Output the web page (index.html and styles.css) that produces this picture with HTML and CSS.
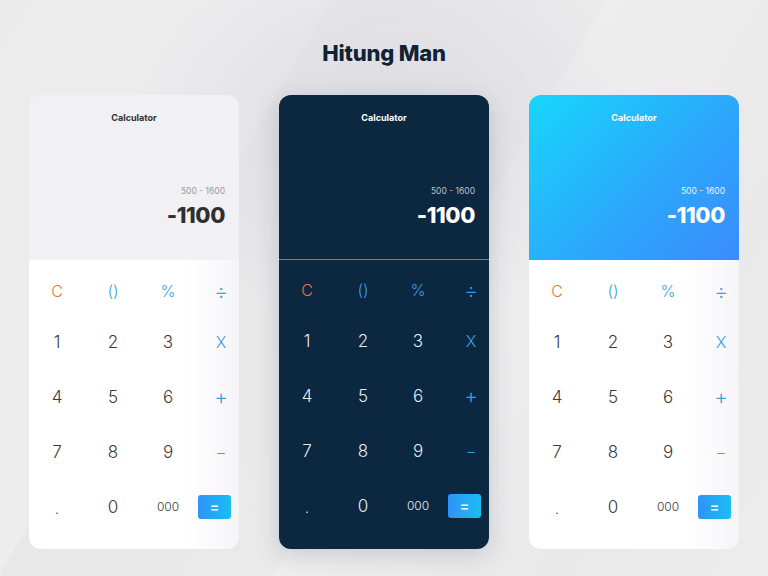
FILE: index.html
```html
<!DOCTYPE html>
<html lang="id">
<head>
  <meta charset="UTF-8" />
  <meta name="viewport" content="width=device-width, initial-scale=1.0"/>
  <title>Hitung Man</title>
  <link rel="stylesheet" href="styles.css">
</head>
<body>

  <h1 class="title">Hitung Man</h1>

  <div class="cards">

    <!-- Tema terang -->
    <div class="calc light">
      <div class="display">
        <div class="calc-name">Calculator</div>
        <div class="expr">500 - 1600</div>
        <div class="result">-1100</div>
      </div>
      <div class="keypad">
        <span class="key clear">C</span>
        <span class="key op">()</span>
        <span class="key op">%</span>
        <span class="key op big">÷</span>
        <span class="key">1</span>
        <span class="key">2</span>
        <span class="key">3</span>
        <span class="key op">X</span>
        <span class="key">4</span>
        <span class="key">5</span>
        <span class="key">6</span>
        <span class="key op big">+</span>
        <span class="key">7</span>
        <span class="key">8</span>
        <span class="key">9</span>
        <span class="key op">−</span>
        <span class="key dot">.</span>
        <span class="key">0</span>
        <span class="key small">000</span>
        <span class="key"><span class="equal">=</span></span>
      </div>
    </div>

    <!-- Tema gelap -->
    <div class="calc dark">
      <div class="display">
        <div class="calc-name">Calculator</div>
        <div class="expr">500 - 1600</div>
        <div class="result">-1100</div>
      </div>
      <div class="keypad">
        <span class="key clear">C</span>
        <span class="key op">()</span>
        <span class="key op">%</span>
        <span class="key op big">÷</span>
        <span class="key">1</span>
        <span class="key">2</span>
        <span class="key">3</span>
        <span class="key op">X</span>
        <span class="key">4</span>
        <span class="key">5</span>
        <span class="key">6</span>
        <span class="key op big">+</span>
        <span class="key">7</span>
        <span class="key">8</span>
        <span class="key">9</span>
        <span class="key op">−</span>
        <span class="key dot">.</span>
        <span class="key">0</span>
        <span class="key small">000</span>
        <span class="key"><span class="equal">=</span></span>
      </div>
    </div>

    <!-- Tema biru -->
    <div class="calc blue">
      <div class="display">
        <div class="calc-name">Calculator</div>
        <div class="expr">500 - 1600</div>
        <div class="result">-1100</div>
      </div>
      <div class="keypad">
        <span class="key clear">C</span>
        <span class="key op">()</span>
        <span class="key op">%</span>
        <span class="key op big">÷</span>
        <span class="key">1</span>
        <span class="key">2</span>
        <span class="key">3</span>
        <span class="key op">X</span>
        <span class="key">4</span>
        <span class="key">5</span>
        <span class="key">6</span>
        <span class="key op big">+</span>
        <span class="key">7</span>
        <span class="key">8</span>
        <span class="key">9</span>
        <span class="key op">−</span>
        <span class="key dot">.</span>
        <span class="key">0</span>
        <span class="key small">000</span>
        <span class="key"><span class="equal">=</span></span>
      </div>
    </div>

  </div>

</body>
</html>
```

FILE: styles.css
```css
body {
  margin: 0;
  height: 576px;
  overflow: hidden;
  font-family: 'Inter', 'Open Sans', sans-serif;
  background:
    radial-gradient(ellipse 260px 200px at 384px 130px, #dcdce2 0%, rgba(220, 220, 226, 0) 100%),
    linear-gradient(120deg, #ebebeb 0%, #ededee 30%, #e8e8e9 30.2%, #eaeaeb 55%, #eeeeee 55.2%, #e9e9ea 80%, #ececec 100%);
}

.title {
  margin: 0;
  padding-top: 39px;
  height: 28px;
  line-height: 28px;
  text-align: center;
  font-size: 22px;
  font-weight: 800;
  color: #0f2236;
  letter-spacing: -0.2px;
}

.cards {
  display: flex;
  justify-content: center;
  gap: 40px;
  margin-top: 28px;
}

.calc {
  width: 210px;
  height: 454px;
  border-radius: 12px;
  overflow: hidden;
  display: flex;
  flex-direction: column;
}

.display {
  height: 165px;
  box-sizing: border-box;
  padding: 18px 14px 0;
  text-align: right;
}

.calc-name {
  text-align: center;
  font-size: 9px;
  line-height: 10px;
  font-weight: 700;
}

.expr {
  margin-top: 62px;
  font-size: 8.5px;
  line-height: 12px;
}

.result {
  margin-top: 5px;
  font-size: 22px;
  line-height: 26px;
  font-weight: 800;
  letter-spacing: -0.4px;
}

.keypad {
  flex: 1;
  display: grid;
  grid-template-columns: 56px 56px 54px 52px;
  grid-template-rows: 46px repeat(4, 55px);
  padding-top: 8px;
}

.key {
  display: flex;
  align-items: center;
  justify-content: center;
  font-size: 17px;
  font-weight: 300;
}

.key.op {
  color: #3b9fe2;
  font-size: 16px;
}

.key.op.big {
  font-size: 21px;
}

.key.clear {
  color: #e8773c;
  font-size: 16px;
}

.key.small {
  font-size: 12px;
}

.key.dot {
  font-size: 14px;
  padding-top: 4px;
}

.equal {
  width: 33px;
  height: 24px;
  border-radius: 3px;
  background: linear-gradient(90deg, #2f93f6, #1bbdf4);
  color: #fff;
  font-size: 14px;
  font-weight: 600;
  display: flex;
  align-items: center;
  justify-content: center;
  margin-right: 13px;
}

/* terang */
.light .display {
  background: #f1f1f3;
  color: #2f2f2f;
}

.light .expr {
  color: #9a9a9a;
}

.light .keypad,
.blue .keypad {
  background: linear-gradient(90deg, #ffffff 0%, #ffffff 75%, #f5f5f8 100%);
  color: #3a3a3a;
}

/* gelap */
.dark {
  background: #0c2740;
  box-shadow: 0 6px 24px rgba(30, 40, 70, 0.18);
}

.dark .display {
  color: #ffffff;
  border-bottom: 1px solid #2f8ede;
}

.dark .expr {
  color: #b8c2cc;
}

.dark .keypad {
  color: #e6ebf0;
  padding-top: 7px;
}

/* biru */
.blue .display {
  background: linear-gradient(135deg, #17d6fc 0%, #2ba9fb 55%, #3a8cfb 100%);
  color: #ffffff;
}

.blue .expr {
  color: #e8f5ff;
}
```
